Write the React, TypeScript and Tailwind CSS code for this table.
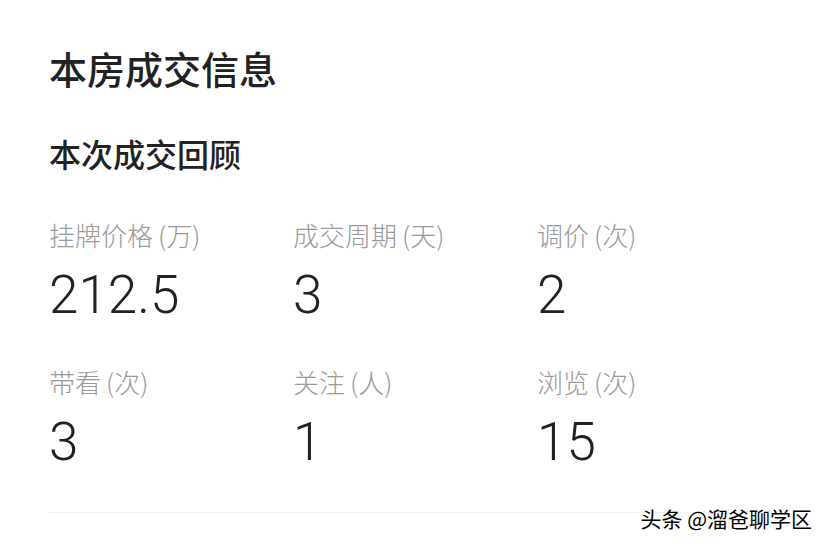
const CJK = "font-['Noto_Sans_CJK_SC',sans-serif]";

type Stat = { label: string; unit: string; value: string };

const STATS: Stat[] = [
  { label: "挂牌价格", unit: "(万)", value: "212.5" },
  { label: "成交周期", unit: "(天)", value: "3" },
  { label: "调价", unit: "(次)", value: "2" },
  { label: "带看", unit: "(次)", value: "3" },
  { label: "关注", unit: "(人)", value: "1" },
  { label: "浏览", unit: "(次)", value: "15" },
];

export default function App() {
  return (
    <div className={`relative w-[828px] h-[547px] bg-white overflow-hidden ${CJK}`}>
      <div className="pl-[49px] pt-[42px]">
        <h1 className="text-[38px] leading-[52px] font-medium text-[#222]">
          本房成交信息
        </h1>
        <h2 className="mt-[37px] text-[32px] leading-[44px] font-medium text-[#222]">
          本次成交回顾
        </h2>
        <div className="mt-[43px] grid grid-cols-[244px_244px_244px] gap-y-[42px]">
          {STATS.map((s) => (
            <div key={s.label} className="flex flex-col">
              <div className="text-[26px] leading-[34px] text-[#9a9a9a] font-light">
                {s.label}
                <span className="ml-[5px]">{s.unit}</span>
              </div>
              <div className="mt-[15px] text-[53px] leading-[56px] font-light text-[#222] font-['Roboto',sans-serif]">
                {s.value}
              </div>
            </div>
          ))}
        </div>
        <div className="mt-[42px] h-px bg-[#efefef] w-[700px]" />
      </div>
      <span className="absolute right-[16px] top-[503px] text-[21px] leading-[30px] text-black [text-shadow:1px_1px_1px_#fff,-1px_-1px_1px_#fff]">
        头条 @溜爸聊学区
      </span>
    </div>
  );
}
